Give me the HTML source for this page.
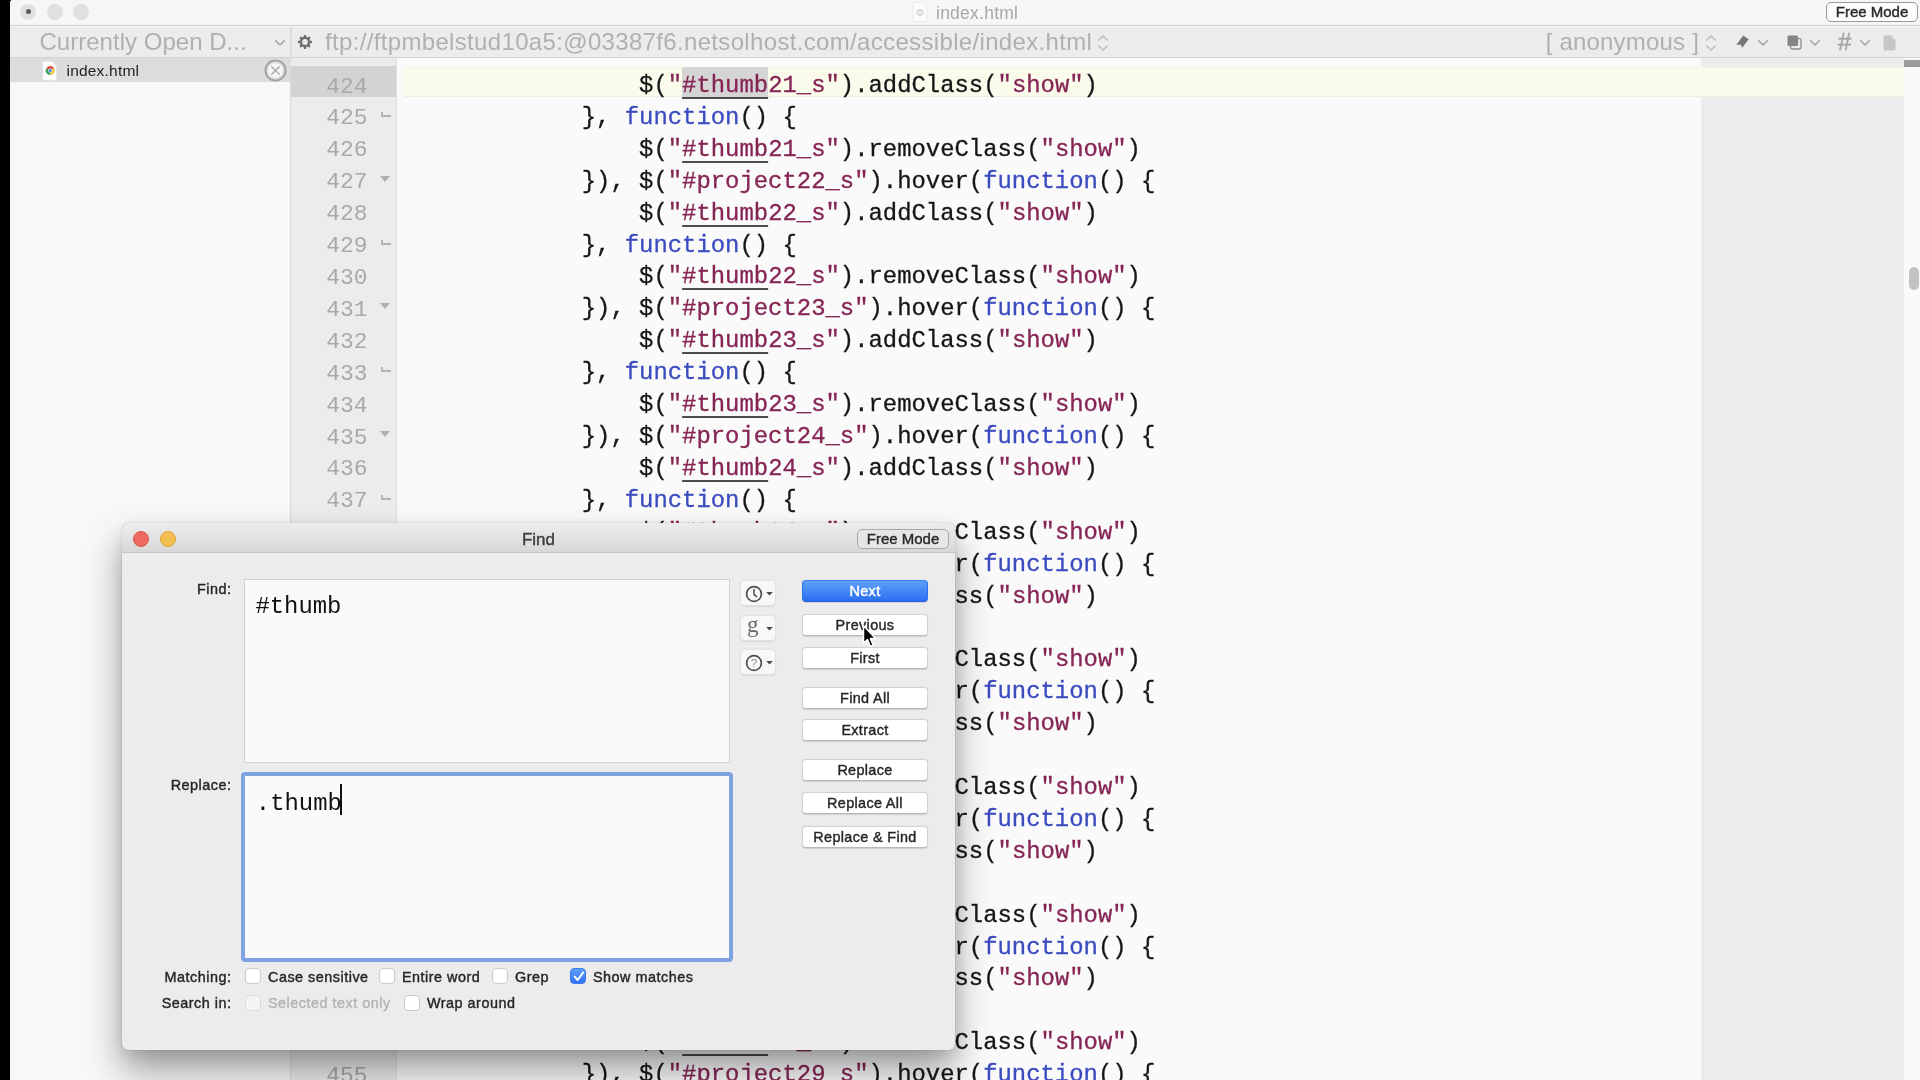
<!DOCTYPE html>
<html lang="en">
<head>
<meta charset="utf-8">
<title>index.html</title>
<style>
*{box-sizing:border-box;margin:0;padding:0}
html,body{width:1920px;height:1080px;overflow:hidden;background:#000}
body{position:relative;font-family:"Liberation Sans",sans-serif;color:#222}
.abs{position:absolute}
#win{will-change:transform;position:absolute;left:10px;top:0;width:1910px;height:1080px;background:#f7f7f7;border-top-left-radius:3px;overflow:hidden}
/* title bar */
#titlebar{position:absolute;left:0;top:0;width:1910px;height:26px;background:#f6f6f6;border-bottom:1px solid #cfcfcf}
.tl{position:absolute;top:3.5px;width:16px;height:16px;border-radius:50%;background:#e0e0e0}
#title{position:absolute;left:926px;top:1.5px;font-size:17.5px;letter-spacing:.25px;line-height:22px;color:#a8a8a8;white-space:nowrap}
.freemode{position:absolute;border:1px solid #9a9a9a;border-radius:5px;background:#fcfcfc;color:#2a2a2a;font-size:15px;text-align:center;white-space:nowrap}
/* toolbar */
#toolbar{position:absolute;left:0;top:27px;width:1910px;height:31px;background:#ececec;border-bottom:1px solid #d2d2d2}
#toolbar .t{position:absolute;top:0px;font-size:24px;line-height:30px;color:#b0b0b0;white-space:nowrap}
/* sidebar */
#sidebar{position:absolute;left:0;top:58px;width:280px;height:1022px;background:#f8f8f8}
#filerow{position:absolute;left:0;top:0;width:280px;height:24px;background:#dcdcdc}
#filerow .n{position:absolute;left:56.5px;top:3.5px;font-size:15.5px;letter-spacing:.2px;line-height:18px;color:#1e1e1e}
/* gutter + editor */
#gutter{position:absolute;left:280px;top:58px;width:107px;height:1022px;background:#ececec;border-left:1px solid #dcdcdc;border-right:1px solid #e0e0e0}
#editor{position:absolute;left:387px;top:58px;width:1507px;height:1022px;background:#fafafa}
#guide{position:absolute;left:1691px;top:58px;width:203px;height:1022px;background:#ececec}
#vscroll{position:absolute;left:1894px;top:58px;width:16px;height:1022px;background:#fafafa}
.ln{position:absolute;left:280px;width:107px;height:32px;font-family:"Liberation Mono",monospace;font-size:22.9px;line-height:32px;color:#a9a9a9;white-space:pre}
.ln span{position:absolute;right:29.5px;top:.5px}
.cl{-webkit-text-stroke:.3px;position:absolute;left:514.4px;height:32px;font-family:"Liberation Mono",monospace;font-size:23.905px;line-height:32px;color:#161616;white-space:pre}
.s{color:#862555}
.k{color:#3b4bc0}
.u{text-decoration:underline;text-decoration-color:#4e4e4e;text-decoration-thickness:2.2px;text-underline-offset:4.8px;text-decoration-skip-ink:none}

/* misc editor decorations */
#curline{position:absolute;left:394px;top:67px;width:1500px;height:30px;background:#fbfbec;border-top:1px solid #f3f3e3;border-bottom:1px solid #eeeedd}
#curnum{position:absolute;left:281px;top:66px;width:105px;height:31px;background:#d3d3d3}
#selbg{position:absolute;left:672px;top:67px;width:86px;height:30px;background:#d5d5d5}
.fs{position:absolute;left:89.5px;top:10px;width:0;height:0;border-left:5px solid transparent;border-right:5px solid transparent;border-top:6px solid #b0b0b0}
.fe{position:absolute;left:91px;top:10px;width:9.5px;height:5px;border-left:2px solid #b4b4b4;border-bottom:2px solid #b4b4b4}
/* dialog */
#dlg{will-change:transform;position:absolute;left:122px;top:523px;width:833px;height:527px;background:#ececec;border-radius:6px;box-shadow:0 0 1px rgba(0,0,0,.5),0 20px 36px rgba(0,0,0,.38),0 5px 16px rgba(0,0,0,.08);overflow:hidden}
#dlgtitle{position:absolute;left:0;top:0;width:833px;height:30px;background:linear-gradient(#ededed,#d7d7d7);border-bottom:1px solid #c6c6c6;border-radius:6px 6px 0 0}
#dlgtitle .ttl{position:absolute;left:0;width:833px;top:6px;text-align:center;font-size:17px;line-height:22px;color:#3c3c3c}
.dot{position:absolute;top:8px;width:16px;height:16px;border-radius:50%}
.lbl{position:absolute;width:109.5px;left:0;text-align:right;font-size:14.4px;letter-spacing:.5px;line-height:18px;color:#262626;white-space:nowrap}
.fld{position:absolute;background:#fafafa;border:1px solid #d0d0d0;font-family:"Liberation Mono",monospace;font-size:23.905px;line-height:30px;color:#111;white-space:pre}
.btn{position:absolute;left:680px;width:126px;height:22px;border-radius:4px;background:#fff;border:1px solid #d2d2d2;border-bottom-color:#b9b9b9;font-size:14.4px;letter-spacing:.35px;line-height:20px;text-align:center;color:#262626;white-space:nowrap;box-shadow:0 .5px 1px rgba(0,0,0,.12)}
.btn.def{-webkit-text-stroke:.45px;background:linear-gradient(#5ea1f8,#2a6df0);border-color:#3b7ff5 #2f6fee #2560e0;color:#fff}
.pop{position:absolute;left:618px;width:36px;height:26px;border-radius:4.5px;background:#f8f8f8;border:1px solid #e2e2e2;box-shadow:0 .5px 1px rgba(0,0,0,.08)}
.cb{position:absolute;width:16px;height:16px;border-radius:4px;background:#fff;border:1px solid #cbcbcb}
.cb.on{background:linear-gradient(#5c9ff8,#2f72f0);border-color:#3a7bf0}
.cb.dis{background:#f4f4f4;border-color:#dcdcdc}
.lbl,.cbl,.btn,.freemode,#dlgtitle .ttl{-webkit-text-stroke:.4px}
.cbl{position:absolute;font-size:14.4px;letter-spacing:.5px;line-height:18px;color:#262626;white-space:nowrap}

#tbdiv{position:absolute;left:279.5px;top:27px;width:2px;height:31px;background:#dcdcdc}

.caret{position:absolute;left:94.6px;top:8px;width:2.4px;height:30.5px;background:#111}
.cb.on svg{position:absolute;left:1.5px;top:2px}
.pop svg{position:absolute}
</style>
</head>
<body>
<div id="win">
  <div id="titlebar">
    <div class="tl" style="left:10px"><div class="abs" style="left:5.5px;top:5.5px;width:5px;height:5px;border-radius:50%;background:#5a5a5a"></div></div>
    <div class="tl" style="left:37px"></div>
    <div class="tl" style="left:63px"></div>
    <svg class="abs" style="left:902px;top:2px" width="16" height="20" viewBox="0 0 16 20"><path d="M1 1.5 Q1 .5 2 .5 L10.5 .5 L15 5 L15 18.5 Q15 19.5 14 19.5 L2 19.5 Q1 19.5 1 18.5 Z" fill="#fbfbfb" stroke="#ececec" stroke-width="1"/><circle cx="8" cy="10.5" r="3.6" fill="#dcdcdc"/><circle cx="8" cy="10.5" r="1.5" fill="#ececec"/></svg>
    <div id="title">index.html</div>
    <div class="freemode" style="left:1816px;top:2px;width:92px;height:20px;line-height:18px">Free Mode</div>
  </div>
  <div id="toolbar">
    <div class="t" style="left:29.5px;letter-spacing:.02px">Currently Open D...</div>
    <div class="t" style="left:315px;letter-spacing:.335px">ftp://ftpmbelstud10a5:@03387f6.netsolhost.com/accessible/index.html</div>
    <div class="t" style="left:1535.7px;letter-spacing:.2px">[ anonymous ]</div>
  </div>
  <div id="tbdiv"></div>
  <svg class="abs" style="left:265px;top:40px" width="10" height="6" viewBox="0 0 10 6"><path d="M0.7 0.7 L5 5 L9.3 0.7" fill="none" stroke="#a6a6a6" stroke-width="1.6" stroke-linecap="round" stroke-linejoin="round"/></svg><svg class="abs" style="left:288.4px;top:35px" width="14" height="14" viewBox="-7 -7 14 14"><g fill="#6a6a6a"><path d="M-1.7 -4.6 L-0.9 -6.9 L0.9 -6.9 L1.7 -4.6 Z" transform="rotate(0)"/><path d="M-1.7 -4.6 L-0.9 -6.9 L0.9 -6.9 L1.7 -4.6 Z" transform="rotate(45)"/><path d="M-1.7 -4.6 L-0.9 -6.9 L0.9 -6.9 L1.7 -4.6 Z" transform="rotate(90)"/><path d="M-1.7 -4.6 L-0.9 -6.9 L0.9 -6.9 L1.7 -4.6 Z" transform="rotate(135)"/><path d="M-1.7 -4.6 L-0.9 -6.9 L0.9 -6.9 L1.7 -4.6 Z" transform="rotate(180)"/><path d="M-1.7 -4.6 L-0.9 -6.9 L0.9 -6.9 L1.7 -4.6 Z" transform="rotate(225)"/><path d="M-1.7 -4.6 L-0.9 -6.9 L0.9 -6.9 L1.7 -4.6 Z" transform="rotate(270)"/><path d="M-1.7 -4.6 L-0.9 -6.9 L0.9 -6.9 L1.7 -4.6 Z" transform="rotate(315)"/></g><circle r="3.9" fill="none" stroke="#6a6a6a" stroke-width="2"/></svg><svg class="abs" style="left:1087.5px;top:34.5px" width="10" height="16" viewBox="0 0 10 16"><path d="M0.8 5 L5 1 L9.2 5 M0.8 11 L5 15 L9.2 11" fill="none" stroke="#bdbdbd" stroke-width="1.5" stroke-linecap="round" stroke-linejoin="round"/></svg><svg class="abs" style="left:1695.5px;top:34.5px" width="10" height="16" viewBox="0 0 10 16"><path d="M0.8 5 L5 1 L9.2 5 M0.8 11 L5 15 L9.2 11" fill="none" stroke="#bdbdbd" stroke-width="1.5" stroke-linecap="round" stroke-linejoin="round"/></svg><svg class="abs" style="left:1725px;top:35px" width="15" height="14" viewBox="0 0 15 14"><path d="M8.2 0.6 L13.6 4.2 L7.2 12.8 L5.6 9.6 L1.2 10 Z" fill="#777"/></svg><svg class="abs" style="left:1748px;top:40px" width="10" height="6" viewBox="0 0 10 6"><path d="M0.7 0.7 L5 5 L9.3 0.7" fill="none" stroke="#a6a6a6" stroke-width="1.6" stroke-linecap="round" stroke-linejoin="round"/></svg><svg class="abs" style="left:1777px;top:35px" width="15" height="15" viewBox="0 0 15 15"><rect x="3.6" y="3.6" width="10.4" height="10.4" rx="1.5" fill="none" stroke="#8c8c8c" stroke-width="1.3"/><rect x="0.5" y="0.5" width="10.6" height="10.6" rx="1.5" fill="#858585"/></svg><svg class="abs" style="left:1800px;top:40px" width="10" height="6" viewBox="0 0 10 6"><path d="M0.7 0.7 L5 5 L9.3 0.7" fill="none" stroke="#a6a6a6" stroke-width="1.6" stroke-linecap="round" stroke-linejoin="round"/></svg><div class="abs" style="left:1828px;top:27px;font-size:24px;line-height:30px;color:#a6a6a6;-webkit-text-stroke:.5px">#</div><svg class="abs" style="left:1850px;top:40px" width="10" height="6" viewBox="0 0 10 6"><path d="M0.7 0.7 L5 5 L9.3 0.7" fill="none" stroke="#a6a6a6" stroke-width="1.6" stroke-linecap="round" stroke-linejoin="round"/></svg><svg class="abs" style="left:1873px;top:35px" width="13" height="16" viewBox="0 0 13 16"><path d="M0.5 1.5 Q0.5 0.5 1.5 0.5 L8 0.5 L12.5 5 L12.5 14.5 Q12.5 15.5 11.5 15.5 L1.5 15.5 Q0.5 15.5 0.5 14.5 Z" fill="#c6c6c6"/><path d="M8 0.5 L8 5 L12.5 5" fill="#d6d6d6" stroke="#bcbcbc" stroke-width=".6"/></svg>
  <div id="sidebar">
    <div id="filerow"><svg class="abs" style="left:32px;top:3px" width="15" height="20" viewBox="0 0 15 20"><path d="M.5 1.2 Q.5 .5 1.2 .5 L10 .5 L14.5 5 L14.5 18.8 Q14.5 19.5 13.8 19.5 L1.2 19.5 Q.5 19.5 .5 18.8 Z" fill="#fdfdfd" stroke="#e2e2e2" stroke-width=".8"/><g transform="translate(8.2 9.6)"><path d="M0 0 L-3.9 -2.25 A4.5 4.5 0 0 1 3.9 -2.25 Z" fill="#d9493a"/><path d="M0 0 L3.9 -2.25 A4.5 4.5 0 0 1 0 4.5 Z" fill="#f3c53a"/><path d="M0 0 L0 4.5 A4.5 4.5 0 0 1 -3.9 -2.25 Z" fill="#3f9d55"/><circle r="2.1" fill="#fff"/><circle r="1.6" fill="#4d86e8"/></g></svg><div class="n">index.html</div><svg class="abs" style="left:254px;top:1px" width="23" height="23" viewBox="0 0 23 23"><circle cx="11.5" cy="11.5" r="10" fill="#f7f7f7" stroke="#a2a2a2" stroke-width="2"/><circle cx="11.5" cy="11.5" r="8" fill="none" stroke="#dcdcdc" stroke-width="1.4"/><path d="M7.8 7.8 L15.2 15.2 M15.2 7.8 L7.8 15.2" stroke="#b4b4b4" stroke-width="1.7" stroke-linecap="round"/></svg></div>
  </div>
  <div id="gutter"></div>
  <div id="editor"></div>
  <div id="guide"></div>
  <div id="vscroll"><div class="abs" style="left:0;top:2px;width:16px;height:7px;background:#9b9b9b"></div><div class="abs" style="left:5px;top:209px;width:10px;height:23px;border-radius:5px;background:#c2c2c2"></div></div>
  <div id="curline"></div>
  <div id="curnum"></div>
  <div id="selbg"></div>
  <div id="lines">
<div class="ln" style="top:70.00px"><span>424</span></div><div class="cl" style="top:70.00px">        $(<span class="s">"<span class="u">#thumb</span>21_s"</span>).addClass(<span class="s">"show"</span>)</div>
<div class="ln" style="top:101.91px"><span>425</span><i class="fe"></i></div><div class="cl" style="top:101.91px">    }, <span class="k">function</span>() {</div>
<div class="ln" style="top:133.82px"><span>426</span></div><div class="cl" style="top:133.82px">        $(<span class="s">"<span class="u">#thumb</span>21_s"</span>).removeClass(<span class="s">"show"</span>)</div>
<div class="ln" style="top:165.73px"><span>427</span><i class="fs"></i></div><div class="cl" style="top:165.73px">    }), $(<span class="s">"#project22_s"</span>).hover(<span class="k">function</span>() {</div>
<div class="ln" style="top:197.64px"><span>428</span></div><div class="cl" style="top:197.64px">        $(<span class="s">"<span class="u">#thumb</span>22_s"</span>).addClass(<span class="s">"show"</span>)</div>
<div class="ln" style="top:229.55px"><span>429</span><i class="fe"></i></div><div class="cl" style="top:229.55px">    }, <span class="k">function</span>() {</div>
<div class="ln" style="top:261.46px"><span>430</span></div><div class="cl" style="top:261.46px">        $(<span class="s">"<span class="u">#thumb</span>22_s"</span>).removeClass(<span class="s">"show"</span>)</div>
<div class="ln" style="top:293.37px"><span>431</span><i class="fs"></i></div><div class="cl" style="top:293.37px">    }), $(<span class="s">"#project23_s"</span>).hover(<span class="k">function</span>() {</div>
<div class="ln" style="top:325.28px"><span>432</span></div><div class="cl" style="top:325.28px">        $(<span class="s">"<span class="u">#thumb</span>23_s"</span>).addClass(<span class="s">"show"</span>)</div>
<div class="ln" style="top:357.19px"><span>433</span><i class="fe"></i></div><div class="cl" style="top:357.19px">    }, <span class="k">function</span>() {</div>
<div class="ln" style="top:389.10px"><span>434</span></div><div class="cl" style="top:389.10px">        $(<span class="s">"<span class="u">#thumb</span>23_s"</span>).removeClass(<span class="s">"show"</span>)</div>
<div class="ln" style="top:421.01px"><span>435</span><i class="fs"></i></div><div class="cl" style="top:421.01px">    }), $(<span class="s">"#project24_s"</span>).hover(<span class="k">function</span>() {</div>
<div class="ln" style="top:452.92px"><span>436</span></div><div class="cl" style="top:452.92px">        $(<span class="s">"<span class="u">#thumb</span>24_s"</span>).addClass(<span class="s">"show"</span>)</div>
<div class="ln" style="top:484.83px"><span>437</span><i class="fe"></i></div><div class="cl" style="top:484.83px">    }, <span class="k">function</span>() {</div>
<div class="ln" style="top:516.74px"><span>438</span></div><div class="cl" style="top:516.74px">        $(<span class="s">"<span class="u">#thumb</span>24_s"</span>).removeClass(<span class="s">"show"</span>)</div>
<div class="ln" style="top:548.65px"><span>439</span><i class="fs"></i></div><div class="cl" style="top:548.65px">    }), $(<span class="s">"#project25_s"</span>).hover(<span class="k">function</span>() {</div>
<div class="ln" style="top:580.56px"><span>440</span></div><div class="cl" style="top:580.56px">        $(<span class="s">"<span class="u">#thumb</span>25_s"</span>).addClass(<span class="s">"show"</span>)</div>
<div class="ln" style="top:612.47px"><span>441</span><i class="fe"></i></div><div class="cl" style="top:612.47px">    }, <span class="k">function</span>() {</div>
<div class="ln" style="top:644.38px"><span>442</span></div><div class="cl" style="top:644.38px">        $(<span class="s">"<span class="u">#thumb</span>25_s"</span>).removeClass(<span class="s">"show"</span>)</div>
<div class="ln" style="top:676.29px"><span>443</span><i class="fs"></i></div><div class="cl" style="top:676.29px">    }), $(<span class="s">"#project26_s"</span>).hover(<span class="k">function</span>() {</div>
<div class="ln" style="top:708.20px"><span>444</span></div><div class="cl" style="top:708.20px">        $(<span class="s">"<span class="u">#thumb</span>26_s"</span>).addClass(<span class="s">"show"</span>)</div>
<div class="ln" style="top:740.11px"><span>445</span><i class="fe"></i></div><div class="cl" style="top:740.11px">    }, <span class="k">function</span>() {</div>
<div class="ln" style="top:772.02px"><span>446</span></div><div class="cl" style="top:772.02px">        $(<span class="s">"<span class="u">#thumb</span>26_s"</span>).removeClass(<span class="s">"show"</span>)</div>
<div class="ln" style="top:803.93px"><span>447</span><i class="fs"></i></div><div class="cl" style="top:803.93px">    }), $(<span class="s">"#project27_s"</span>).hover(<span class="k">function</span>() {</div>
<div class="ln" style="top:835.84px"><span>448</span></div><div class="cl" style="top:835.84px">        $(<span class="s">"<span class="u">#thumb</span>27_s"</span>).addClass(<span class="s">"show"</span>)</div>
<div class="ln" style="top:867.75px"><span>449</span><i class="fe"></i></div><div class="cl" style="top:867.75px">    }, <span class="k">function</span>() {</div>
<div class="ln" style="top:899.66px"><span>450</span></div><div class="cl" style="top:899.66px">        $(<span class="s">"<span class="u">#thumb</span>27_s"</span>).removeClass(<span class="s">"show"</span>)</div>
<div class="ln" style="top:931.57px"><span>451</span><i class="fs"></i></div><div class="cl" style="top:931.57px">    }), $(<span class="s">"#project28_s"</span>).hover(<span class="k">function</span>() {</div>
<div class="ln" style="top:963.48px"><span>452</span></div><div class="cl" style="top:963.48px">        $(<span class="s">"<span class="u">#thumb</span>28_s"</span>).addClass(<span class="s">"show"</span>)</div>
<div class="ln" style="top:995.39px"><span>453</span><i class="fe"></i></div><div class="cl" style="top:995.39px">    }, <span class="k">function</span>() {</div>
<div class="ln" style="top:1027.30px"><span>454</span></div><div class="cl" style="top:1027.30px">        $(<span class="s">"<span class="u">#thumb</span>28_s"</span>).removeClass(<span class="s">"show"</span>)</div>
<div class="ln" style="top:1059.21px"><span>455</span></div><div class="cl" style="top:1059.21px">    }), $(<span class="s">"#project29_s"</span>).hover(<span class="k">function</span>() {</div>
</div>
</div>
<div id="dlg">
  <div id="dlgtitle">
    <div class="dot" style="left:11px;background:#ee6a5f;border:1px solid #dd5348"></div>
    <div class="dot" style="left:38px;background:#f5bf4f;border:1px solid #dfa73a"></div>
    <div class="ttl">Find</div>
    <div class="freemode" style="left:735px;top:6px;width:92px;height:20px;line-height:18px;background:#e6e6e6;border-color:#a8a8a8">Free Mode</div>
  </div>
  <div class="lbl" style="top:57px">Find:</div>
  <div class="fld" style="left:122px;top:56px;width:486px;height:184px;padding:11.5px 0 0 10.4px">#thumb</div>
  <div class="lbl" style="top:253px">Replace:</div>
  <div class="fld" id="repl" style="left:119px;top:249px;width:492px;height:190px;padding:12.5px 0 0 10.8px;border:4.5px solid #7fa2e0;border-radius:4px">.thumb<span class="caret"></span></div>
  <div class="pop" style="top:57px"><svg style="left:4px;top:3.5px" width="18" height="18" viewBox="0 0 18 18"><circle cx="9" cy="9" r="7.4" fill="none" stroke="#4d4d4d" stroke-width="1.7"/><path d="M9 4.6 L9 9.3 L11.6 11.6" fill="none" stroke="#4d4d4d" stroke-width="1.5" stroke-linecap="round"/></svg><svg style="left:25px;top:11px" width="7" height="4" viewBox="0 0 7 4"><path d="M0.2 0 L6.8 0 L3.5 3.6 Z" fill="#4a4a4a"/></svg></div>
  <div class="pop" style="top:91.5px"><div class="abs" style="left:6px;top:-6px;font-family:'Liberation Serif',serif;font-size:23px;line-height:30px;color:#6a6a6a">g</div><svg style="left:25px;top:11px" width="7" height="4" viewBox="0 0 7 4"><path d="M0.2 0 L6.8 0 L3.5 3.6 Z" fill="#4a4a4a"/></svg></div>
  <div class="pop" style="top:126px"><svg style="left:4px;top:3.5px" width="18" height="18" viewBox="0 0 18 18"><circle cx="9" cy="9" r="7.4" fill="none" stroke="#4d4d4d" stroke-width="1.7"/><text x="9" y="13.2" text-anchor="middle" font-family="Liberation Sans, sans-serif" font-size="11.5" fill="#8a8a8a">?</text></svg><svg style="left:25px;top:11px" width="7" height="4" viewBox="0 0 7 4"><path d="M0.2 0 L6.8 0 L3.5 3.6 Z" fill="#4a4a4a"/></svg></div>
  <div class="btn def" style="top:57px">Next</div>
  <div class="btn" style="top:91px">Previous</div>
  <div class="btn" style="top:124px">First</div>
  <div class="btn" style="top:164px">Find All</div>
  <div class="btn" style="top:196px">Extract</div>
  <div class="btn" style="top:236px">Replace</div>
  <div class="btn" style="top:269px">Replace All</div>
  <div class="btn" style="top:303px">Replace &amp; Find</div>
  <div class="lbl" style="top:444.7px">Matching:</div>
  <div class="cb" style="left:123px;top:445.2px"></div><div class="cbl" style="left:146px;top:444.7px">Case sensitive</div>
  <div class="cb" style="left:257px;top:445.2px"></div><div class="cbl" style="left:280px;top:444.7px">Entire word</div>
  <div class="cb" style="left:370px;top:445.2px"></div><div class="cbl" style="left:393px;top:444.7px">Grep</div>
  <div class="cb on" style="left:448px;top:445.2px"><svg width="12" height="11" viewBox="0 0 12 11"><path d="M1.6 5.6 L4.6 9 L10.2 1.4" fill="none" stroke="#fff" stroke-width="1.9" stroke-linecap="round" stroke-linejoin="round"/></svg></div><div class="cbl" style="left:471px;top:444.7px">Show matches</div>
  <div class="lbl" style="top:471px">Search in:</div>
  <div class="cb dis" style="left:123px;top:472px"></div><div class="cbl" style="left:146px;top:471px;color:#b4b4b4">Selected text only</div>
  <div class="cb" style="left:282px;top:472px"></div><div class="cbl" style="left:305px;top:471px">Wrap around</div>
</div>
<svg class="abs" style="left:861px;top:624px" width="16" height="25" viewBox="0 0 16 25"><path d="M2.5 1.8 L2.5 19.2 L6.5 15.6 L9.3 22.4 L12.2 21.2 L9.4 14.6 L14.6 14.4 Z" fill="#000" stroke="#fff" stroke-width="1.5" stroke-linejoin="round"/></svg>
</body>
</html>
